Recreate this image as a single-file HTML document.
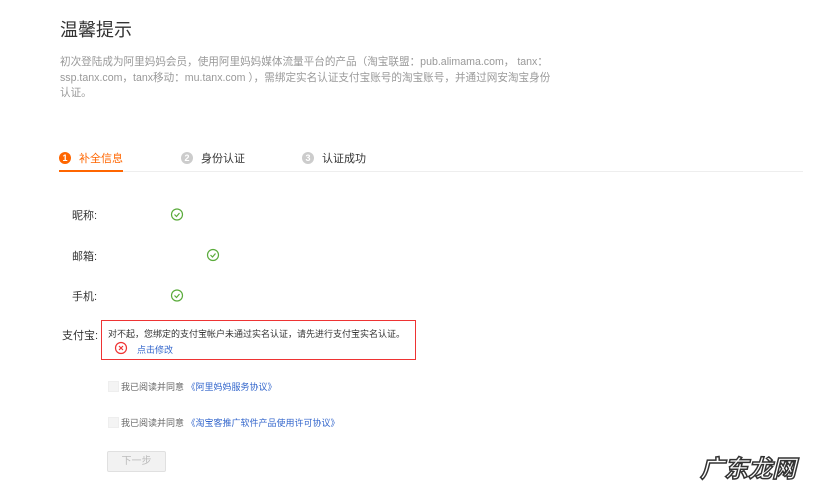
<!DOCTYPE html>
<html><head><meta charset="utf-8"><style>
body{margin:0;width:833px;height:493px;background:#fff;font-family:"Liberation Sans","Noto Sans CJK SC",sans-serif;position:relative;overflow:hidden}
.a{position:absolute;white-space:nowrap}
.chk{position:absolute;width:9px;height:9px;border:1px solid #eee;background:#f4f4f4}
.circ{display:inline-block;width:12px;height:12px;border-radius:50%;background:#ccc;color:#fff;font-size:9px;text-align:center;line-height:12px;font-weight:bold;vertical-align:middle;margin-right:8px;position:relative;top:-1px}
</style></head><body>
<div class="a" style="left:60px;top:16px;font-size:18px;color:#333">温馨提示</div>
<div class="a" style="left:60px;top:55px;font-size:10.6px;line-height:15.5px;color:#999">初次登陆成为阿里妈妈会员，使用阿里妈妈媒体流量平台的产品（淘宝联盟：pub.alimama.com， tanx：<br>ssp.tanx.com，tanx移动：mu.tanx.com ），需绑定实名认证支付宝账号的淘宝账号，并通过网安淘宝身份<br>认证。</div>
<div class="a" style="left:59px;top:150px;font-size:11px;color:#f60"><span class="circ" style="background:#f60">1</span>补全信息</div>
<div class="a" style="left:181px;top:150px;font-size:11px;color:#333"><span class="circ">2</span>身份认证</div>
<div class="a" style="left:302px;top:150px;font-size:11px;color:#333"><span class="circ">3</span>认证成功</div>
<div class="a" style="left:59px;top:171px;width:744px;height:1px;background:#eee"></div>
<div class="a" style="left:59px;top:170px;width:64px;height:2px;background:#f60"></div>
<svg class="a" style="left:0;top:0" width="833" height="493">
<g fill="none" stroke="#5aab3b" stroke-width="1.2"><circle cx="177" cy="214.5" r="5.5"/><path d="M174.5 214.5l2 2 3-3.5"/>
<circle cx="213" cy="255" r="5.5"/><path d="M210.5 255l2 2 3-3.5"/>
<circle cx="177" cy="295.5" r="5.5"/><path d="M174.5 295.5l2 2 3-3.5"/></g>
<g fill="none" stroke="#e33" stroke-width="1.2"><circle cx="121" cy="348" r="5.5"/><path d="M119 346l4 4M123 346l-4 4"/></g>
</svg>
<div class="a" style="left:72px;top:207px;font-size:11px;color:#333">昵称:</div>
<div class="a" style="left:72px;top:248px;font-size:11px;color:#333">邮箱:</div>
<div class="a" style="left:72px;top:288px;font-size:11px;color:#333">手机:</div>
<div class="a" style="left:62px;top:327px;font-size:11px;color:#333">支付宝:</div>
<div class="a" style="left:101px;top:320px;width:313px;height:38px;border:1.5px solid #e33"></div>
<div class="a" style="left:108px;top:327px;font-size:9px;color:#333">对不起，您绑定的支付宝帐户未通过实名认证，请先进行支付宝实名认证。</div>
<div class="a" style="left:137px;top:343px;font-size:9px;color:#36c">点击修改</div>
<div class="chk" style="left:108px;top:381px"></div>
<div class="a" style="left:121px;top:380px;font-size:9px;color:#666">我已阅读并同意 <span style="color:#36c">《阿里妈妈服务协议》</span></div>
<div class="chk" style="left:108px;top:417px"></div>
<div class="a" style="left:121px;top:416px;font-size:9px;color:#666">我已阅读并同意 <span style="color:#36c">《淘宝客推广软件产品使用许可协议》</span></div>
<div class="a" style="left:107px;top:451px;width:57px;height:19px;border:1px solid #e0e0e0;background:#f2f2f2;border-radius:2px;color:#bbb;font-size:10px;text-align:center;line-height:19px">下一步</div>
<div class="a" style="left:700px;top:449px;font-size:24px;font-weight:bold;color:#fff;-webkit-text-stroke:1.5px #333;font-style:italic">广东龙网</div>
</body></html>
